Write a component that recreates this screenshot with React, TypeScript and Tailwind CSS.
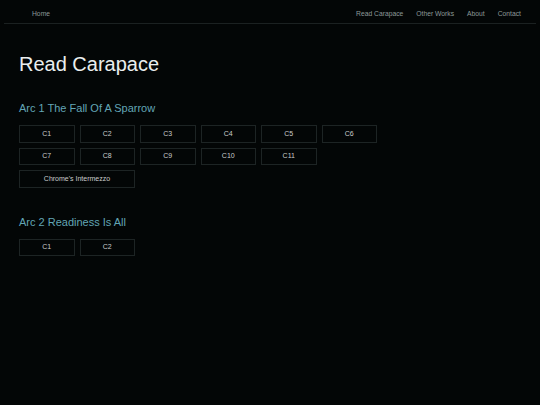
import React from 'react';

const arcs = [
  {
    title: 'Arc 1 The Fall Of A Sparrow',
    chapters: ['C1', 'C2', 'C3', 'C4', 'C5', 'C6', 'C7', 'C8', 'C9', 'C10', 'C11'],
    extra: "Chrome's Intermezzo",
  },
  {
    title: 'Arc 2 Readiness Is All',
    chapters: ['C1', 'C2'],
    extra: null as string | null,
  },
];

const navLinks = ['Read Carapace', 'Other Works', 'About', 'Contact'];

const App: React.FC = () => {
  return (
    <div className="w-[540px] h-[405px] bg-[#030606] text-white font-['Liberation_Sans',Arial,sans-serif] overflow-hidden">
      {/* Top nav */}
      <div className="mx-[4px] h-[24px] pt-[6px] flex items-center justify-between border-b border-[#1b2121] text-[6.75px] text-[#8d9999]">
        <span className="ml-[28px]">Home</span>
        <div className="flex items-center gap-[13px] mr-[15px]">
          {navLinks.map(link => (
            <span key={link}>{link}</span>
          ))}
        </div>
      </div>

      <div className="px-[19px]">
        <h1 className="mt-[28px] text-[20px] leading-[24px] text-[#eaeeee]">Read Carapace</h1>

        {arcs.map((arc, idx) => (
          <div key={arc.title} className={idx === 0 ? 'mt-[25px]' : 'mt-[27px]'}>
            <h2 className="text-[11px] leading-[14px] text-[#62a5b5]">{arc.title}</h2>
            <div className="mt-[10px] grid grid-cols-[repeat(6,55.5px)] gap-x-[5px] gap-y-[5px]">
              {arc.chapters.map(ch => (
                <div
                  key={ch}
                  className="h-[17.5px] flex items-center justify-center border border-[#1d2424] text-[7px] text-[#c9cccc]"
                >
                  {ch}
                </div>
              ))}
              {arc.extra && (
                <div className="col-span-2 h-[17.5px] flex items-center justify-center border border-[#1d2424] text-[7px] text-[#c9cccc]">
                  {arc.extra}
                </div>
              )}
            </div>
          </div>
        ))}
      </div>
    </div>
  );
};

export default App;
